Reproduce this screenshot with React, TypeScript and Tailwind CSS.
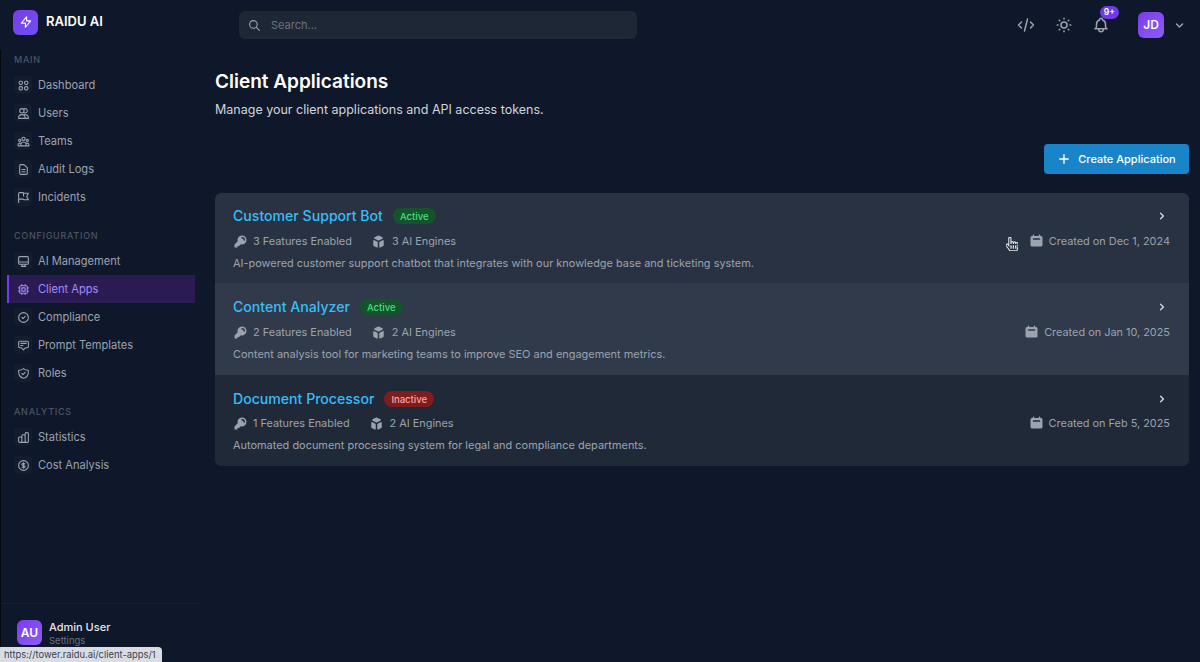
import type { ComponentType } from "react";
import { FaHandPointer } from "react-icons/fa";
import {
  HiCalendar,
  HiChevronDown,
  HiChevronRight,
  HiCube,
  HiKey,
  HiOutlineAnnotation,
  HiOutlineBell,
  HiOutlineChartBar,
  HiOutlineCheckCircle,
  HiOutlineChip,
  HiOutlineCode,
  HiOutlineCurrencyDollar,
  HiOutlineDesktopComputer,
  HiOutlineDocumentText,
  HiOutlineFlag,
  HiOutlineLightningBolt,
  HiOutlineSearch,
  HiOutlineShieldCheck,
  HiOutlineSun,
  HiOutlineUserGroup,
  HiOutlineUsers,
  HiOutlineViewGrid,
  HiPlus,
} from "react-icons/hi";

type NavItem = { label: string; icon: ComponentType<{ className?: string }>; active?: boolean };

const navGroups: { title: string; items: NavItem[] }[] = [
  {
    title: "MAIN",
    items: [
      { label: "Dashboard", icon: HiOutlineViewGrid },
      { label: "Users", icon: HiOutlineUsers },
      { label: "Teams", icon: HiOutlineUserGroup },
      { label: "Audit Logs", icon: HiOutlineDocumentText },
      { label: "Incidents", icon: HiOutlineFlag },
    ],
  },
  {
    title: "CONFIGURATION",
    items: [
      { label: "AI Management", icon: HiOutlineDesktopComputer },
      { label: "Client Apps", icon: HiOutlineChip, active: true },
      { label: "Compliance", icon: HiOutlineCheckCircle },
      { label: "Prompt Templates", icon: HiOutlineAnnotation },
      { label: "Roles", icon: HiOutlineShieldCheck },
    ],
  },
  {
    title: "ANALYTICS",
    items: [
      { label: "Statistics", icon: HiOutlineChartBar },
      { label: "Cost Analysis", icon: HiOutlineCurrencyDollar },
    ],
  },
];

const apps = [
  {
    name: "Customer Support Bot",
    active: true,
    features: "3 Features Enabled",
    engines: "3 AI Engines",
    created: "Created on Dec 1, 2024",
    description: "AI-powered customer support chatbot that integrates with our knowledge base and ticketing system.",
    rowClass: "bg-[#283242] h-[90px] pt-[14px]",
    metaClass: "mt-[7px]",
  },
  {
    name: "Content Analyzer",
    active: true,
    features: "2 Features Enabled",
    engines: "2 AI Engines",
    created: "Created on Jan 10, 2025",
    description: "Content analysis tool for marketing teams to improve SEO and engagement metrics.",
    rowClass: "bg-[#303a4a] h-[92px] pt-[15px]",
    metaClass: "mt-[7px]",
  },
  {
    name: "Document Processor",
    active: false,
    features: "1 Features Enabled",
    engines: "2 AI Engines",
    created: "Created on Feb 5, 2025",
    description: "Automated document processing system for legal and compliance departments.",
    rowClass: "bg-[#1f2938] h-[91px] pt-[15px]",
    metaClass: "mt-[6px]",
  },
];

function Sidebar() {
  return (
    <aside className="flex w-[201px] shrink-0 flex-col border-l border-[#05080f] bg-[#0f172a]">
      <div className="flex flex-1 flex-col px-[6px] pt-[2.5px]">
        {navGroups.map((group) => (
          <div key={group.title} className="mb-[17.5px]">
            <div className="mb-[4.5px] h-[14px] pl-[7px] text-[9px] font-medium leading-[14px] tracking-[0.08em] text-[#4b5563]">
              {group.title}
            </div>
            <div className="flex flex-col">
              {group.items.map((item) => (
                <div
                  key={item.label}
                  className={`flex h-[28px] w-[188px] items-center gap-[6px] border-l-2 pl-[5px] text-[11.1px] ${
                    item.active ? "border-[#7c3aed] bg-[#2a1c52] text-[#a78bfa]" : "border-transparent text-[#9ca3af]"
                  }`}
                >
                  <span className={`flex h-[18px] w-[18px] items-center justify-center rounded ${item.active ? "" : "bg-[#141d30]"}`}>
                    <item.icon className="h-[13px] w-[13px]" />
                  </span>
                  {item.label}
                </div>
              ))}
            </div>
          </div>
        ))}
      </div>
      <div className="flex h-[59px] items-start gap-[7px] border-t border-[#151e2e] pl-[16px] pt-[16px]">
        <div className="flex h-[25px] w-[25px] shrink-0 items-center justify-center rounded-md bg-gradient-to-br from-[#7c3aed] to-[#8b5cf6] text-[12px] font-semibold text-white">
          AU
        </div>
        <div className="-mt-[1px]">
          <div className="text-[11px] font-medium leading-[16px] text-[#e5e7eb]">Admin User</div>
          <div className="-mt-[1px] text-[9.5px] leading-[13px] text-[#6b7280]">Settings</div>
        </div>
      </div>
    </aside>
  );
}

function AppRow({ app }: { app: (typeof apps)[number] }) {
  return (
    <div className={`flex flex-col pl-[18px] pr-[19px] ${app.rowClass}`}>
      <div className="flex h-[18px] items-center gap-[10px]">
        <span className="text-[14.1px] font-medium leading-[18px] text-[#38bdf8]">{app.name}</span>
        <span
          className={`rounded-full px-[7px] py-[1.5px] text-[9.5px] font-medium leading-[13px] ${
            app.active ? "bg-[#14532d] text-[#4ade80]" : "bg-[#7f1d1d] text-[#fca5a5]"
          }`}
        >
          {app.active ? "Active" : "Inactive"}
        </span>
        <HiChevronRight className="ml-auto mr-[1px] h-[14px] w-[14px] text-[#d1d5db]" />
      </div>
      <div className={`flex h-[18px] items-center text-[10.9px] text-[#9ca3af] ${app.metaClass}`}>
        <HiKey className="mr-[5px] h-[15px] w-[15px]" />
        {app.features}
        <HiCube className="ml-[19px] mr-[6px] h-[15px] w-[15px]" />
        {app.engines}
        <span className="ml-auto flex items-center gap-[5px]">
          <HiCalendar className="h-[15px] w-[15px]" />
          {app.created}
        </span>
      </div>
      <p className="mt-[5px] text-[10.95px] leading-[16px] text-[#9ca3af]">{app.description}</p>
    </div>
  );
}

export default function App() {
  return (
    <div className="relative flex h-[662px] w-[1200px] flex-col overflow-hidden bg-[#0f172a] font-['Inter',sans-serif]">
      <header className="flex h-[50px] shrink-0 items-center pl-[13px] pr-[13px]">
        <div className="-mt-[6px] flex w-[226px] items-center gap-[8px]">
          <div className="flex h-[25px] w-[25px] items-center justify-center rounded-md bg-gradient-to-br from-[#7c3aed] to-[#6d4ff0]">
            <HiOutlineLightningBolt className="h-[14px] w-[14px] text-white" />
          </div>
          <span className="text-[13px] font-semibold text-white">RAIDU AI</span>
        </div>
        <div className="flex h-[28px] w-[398px] items-center gap-[10px] rounded-md bg-[#1e2735] pl-[9px] text-[11px] text-[#6b7280]">
          <HiOutlineSearch className="h-[13px] w-[13px] text-[#9ca3af]" />
          Search...
        </div>
        <div className="ml-auto flex items-center text-[#9ca3af]">
          <HiOutlineCode className="h-[18px] w-[18px]" />
          <HiOutlineSun className="ml-[20px] h-[18px] w-[18px]" />
          <div className="relative ml-[19px]">
            <HiOutlineBell className="h-[18px] w-[18px]" />
            <span className="absolute -right-[9px] -top-[10px] rounded-full bg-[#6d3be8] px-[4px] text-[8.5px] font-semibold leading-[13px] text-white">
              9+
            </span>
          </div>
          <div className="ml-[28px] flex h-[26px] w-[26px] items-center justify-center rounded-md bg-gradient-to-br from-[#7c3aed] to-[#8b5cf6] text-[12px] font-semibold text-white">
            JD
          </div>
          <HiChevronDown className="ml-[8px] h-[15px] w-[15px]" />
        </div>
      </header>
      <div className="flex min-h-0 flex-1">
        <Sidebar />
        <main className="min-w-0 flex-1 pl-[14px] pr-[11px] pt-[20px]">
          <h1 className="text-[19px] font-semibold leading-[24px] text-white">Client Applications</h1>
          <p className="mt-[6px] text-[12.5px] leading-[20px] text-[#d1d5db]">Manage your client applications and API access tokens.</p>
          <div className="mt-[24px] flex justify-end">
            <button className="flex h-[30px] w-[145px] items-center justify-center gap-[7px] rounded bg-[#1a84c8] text-[11px] font-medium text-white">
              <HiPlus className="h-[14px] w-[14px]" />
              Create Application
            </button>
          </div>
          <div className="mt-[19px] overflow-hidden rounded-md">
            {apps.map((app) => (
              <AppRow key={app.name} app={app} />
            ))}
          </div>
        </main>
      </div>
      <FaHandPointer className="absolute left-[1006px] top-[237px] h-[14px] w-[12px] text-[#1f2937] [stroke:#e5e7eb] [stroke-width:40]" />
      <div className="absolute bottom-0 left-0 h-[15px] w-[162px] rounded-tr-[4px] bg-[#d9dde3] pl-[4px] text-[9.4px] leading-[15px] text-[#374151]">
        https://tower.raidu.ai/client-apps/1
      </div>
    </div>
  );
}
